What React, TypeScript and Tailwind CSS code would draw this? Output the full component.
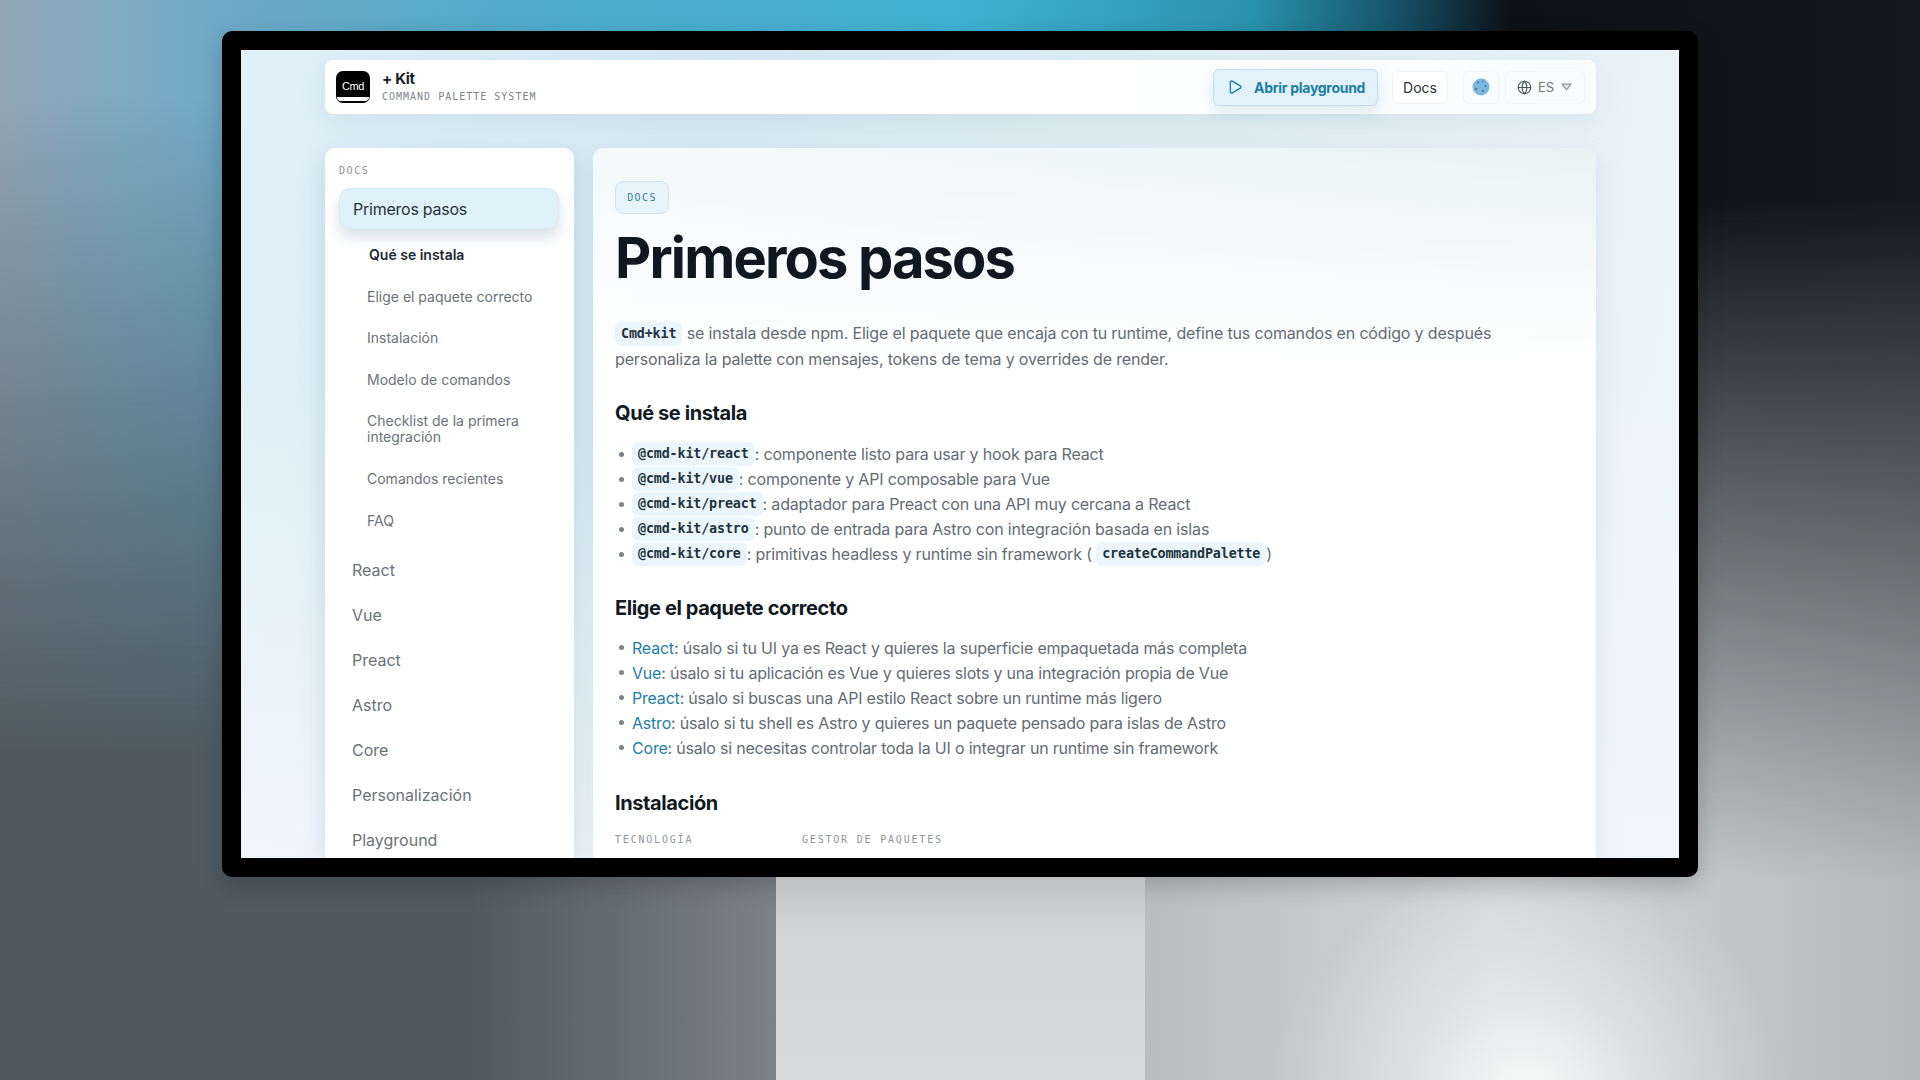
import { Globe, Play } from "lucide-react";
import type { ReactNode } from "react";

const sans = "font-['Inter','Noto_Sans',sans-serif]";
const mono = "font-['DejaVu_Sans_Mono','Liberation_Mono',monospace]";

function Code({ children }: { children: string }) {
  return (
    <code className="inline-flex items-center h-[24px] align-middle font-['DejaVu_Sans_Mono',monospace] text-[13.4px] font-bold text-[#1d3340] bg-[#eaf6fb] rounded-[6px] px-[6px] -translate-y-[1px]">
      {children}
    </code>
  );
}

function Sub({ children, active }: { children: string; active?: boolean }) {
  return (
    <div className={active ? "flex items-center h-[41.5px] pl-[30px] text-[14px] font-semibold text-[#1f2933]" : "flex items-center h-[41.5px] pl-[28px] text-[14px] text-[#6b7278]"}>
      {children}
    </div>
  );
}

function Top({ children }: { children: string }) {
  return <div className="flex items-center h-[45px] pl-[13px] text-[16px] text-[#6b7278]">{children}</div>;
}

function Li({ children }: { children: ReactNode }) {
  return (
    <li className="flex items-center h-[25px] text-[16px] text-[#646c73]">
      <span className="w-[5px] h-[5px] rounded-full bg-[#7b8288] ml-[4px] mr-[8px]" />
      <span className="whitespace-pre">{children}</span>
    </li>
  );
}

function Pkg({ name }: { name: string }) {
  return <span className="text-[#1f7ea6]">{name}</span>;
}

export default function App() {
  return (
    <div className={`${sans} relative w-[1920px] h-[1080px] overflow-hidden flex flex-col items-center pt-[31px] bg-[radial-gradient(ellipse_260px_230px_at_1530px_1095px,rgba(255,255,255,0.85)_0,rgba(255,255,255,0.35)_45%,rgba(255,255,255,0)_100%),linear-gradient(90deg,#4f5a62_0,#4f5a62_470px,#7b8288_776px,#b9bdbf_1146px,#d5d7d9_1500px,#b3b8ba_1920px)]`}>
      <div className="absolute left-0 top-0 w-[960px] h-[780px] bg-[linear-gradient(90deg,#93a5b5_0,#7caac3_130px,#6ea9c6_230px,#52abcb_500px,#3fb2d3_960px)] [mask-image:linear-gradient(180deg,black_0,black_100px,transparent_760px)]" />
      <div className="absolute left-[960px] top-0 w-[960px] h-[880px] bg-[linear-gradient(90deg,#3fb2d3_0,#2a93ae_290px,#165166_440px,#0c1116_550px,#15181d_960px)] [mask-image:linear-gradient(180deg,black_0,black_200px,transparent_880px)]" />
      <div className="relative w-[1476px] h-[846px] shrink-0 bg-black rounded-[10px] p-[19px] shadow-[0_8px_24px_rgba(0,0,0,0.2)]">
        <div className="w-[1438px] h-[808px] overflow-hidden flex flex-col pl-[84px] pr-[83px] pt-[10px] bg-[linear-gradient(180deg,rgba(240,247,252,0)_40%,rgba(240,247,252,1)_100%),linear-gradient(100deg,#e0f0f8_0,#d7e9f2_30%,#e2eff3_70%,#eef6fa_100%)]">
          <header className="h-[54px] shrink-0 flex items-center justify-between bg-[linear-gradient(90deg,#ffffff_0,#ffffff_60%,#f8fcfd_100%)] rounded-[8px] shadow-[0_8px_24px_rgba(120,160,180,0.15)] pl-[11px] pr-[11px]">
            <div className="flex items-center gap-[12px]">
              <div className="w-[34px] h-[32px] rounded-[7px] bg-black flex items-center justify-center relative overflow-hidden">
                <span className="font-['Liberation_Sans',sans-serif] text-[11px] text-white tracking-[-0.03em] -mt-[2px]">Cmd</span>
                <span className="absolute left-[1px] right-[1px] bottom-[2px] h-[4px] bg-white rounded-b-[5px]" />
              </div>
              <div className="flex flex-col">
                <span className="text-[15px] leading-[18px] font-bold text-[#17202a] tracking-[-0.02em]">+ Kit</span>
                <span className={`${mono} mt-[2px] text-[10px] leading-[14px] tracking-[0.1em] text-[#7d858b]`}>COMMAND PALETTE SYSTEM</span>
              </div>
            </div>
            <div className="flex items-center">
              <div className="w-[165px] h-[37px] rounded-[6px] border border-[#c4deec] bg-[#e3f2fa] flex items-center gap-[11px] pl-[13px] text-[14px] font-bold text-[#1b7fa3] shadow-[0_6px_16px_rgba(120,170,200,0.25)] tracking-[-0.02em]">
                <Play size={16} strokeWidth={2} />
                <span>Abrir playground</span>
              </div>
              <div className="ml-[14px] w-[56px] h-[33px] rounded-[6px] border border-[#f0f3f5] bg-white flex items-center justify-center text-[14px] text-[#2b3238]">Docs</div>
              <div className="ml-[15px] w-[36px] h-[33px] rounded-[6px] border border-[#f4f6f7] flex items-center justify-center">
                <svg width="18" height="18" viewBox="0 0 18 18">
                  <circle cx="9" cy="9" r="8.5" fill="#7db8e0" />
                  <circle cx="6" cy="4.5" r="1" fill="#3f6f92" />
                  <circle cx="11" cy="3.5" r="0.8" fill="#3f6f92" />
                  <circle cx="13.5" cy="8" r="1" fill="#3f6f92" />
                  <circle cx="4" cy="11" r="1.2" fill="#3f7f78" />
                  <circle cx="11" cy="13" r="1.1" fill="#3f6f92" />
                </svg>
              </div>
              <div className="ml-[6px] w-[80px] h-[33px] rounded-[6px] border border-[#f4f6f7] flex items-center pl-[11px] gap-[6px] text-[13px] leading-[15px] text-[#6f767c]">
                <Globe size={15} className="text-[#4b5560]" strokeWidth={1.75} />
                <span>ES</span>
                <svg width="11" height="8" viewBox="0 0 11 8" className="ml-[1px]">
                  <path d="M1 1.2h9L5.5 6.8z" fill="#e4e7ea" stroke="#8d9499" strokeWidth="1.2" strokeLinejoin="round" />
                </svg>
              </div>
            </div>
          </header>

          <div className="flex gap-[19px] mt-[34px] flex-1 min-h-0">
            <aside className="w-[249px] shrink-0 bg-white rounded-t-[10px] shadow-[0_8px_24px_rgba(110,150,175,0.28)] px-[14px] pt-[16px] overflow-hidden">
              <div className={`${mono} text-[10px] leading-[14px] tracking-[0.16em] text-[#8b9196]`}>DOCS</div>
              <div className="mt-[10px] w-[220px] h-[41px] rounded-[11px] border border-[#d8ecf6] bg-[#dff1f9] flex items-center pl-[13px] text-[16px] tracking-[-0.015em] text-[#27323b] shadow-[0_8px_14px_rgba(100,140,160,0.25)]">Primeros pasos</div>
              <div className="mt-[5px]">
                <Sub active>Qué se instala</Sub>
                <Sub>Elige el paquete correcto</Sub>
                <Sub>Instalación</Sub>
                <Sub>Modelo de comandos</Sub>
                <div className="h-[58px] flex items-center pl-[28px] text-[14px] leading-[16px] text-[#6b7278] pr-[12px]">Checklist de la primera integración</div>
                <Sub>Comandos recientes</Sub>
                <Sub>FAQ</Sub>
              </div>
              <div className="mt-[6px]">
                <Top>React</Top>
                <Top>Vue</Top>
                <Top>Preact</Top>
                <Top>Astro</Top>
                <Top>Core</Top>
                <Top>Personalización</Top>
                <Top>Playground</Top>
              </div>
            </aside>

            <main className="flex-1 min-w-0 rounded-t-[10px] overflow-hidden shadow-[0_8px_24px_rgba(110,150,175,0.18)] bg-[linear-gradient(180deg,rgba(255,255,255,0)_0,rgba(255,255,255,1)_30%),linear-gradient(90deg,#f3fafb_0,#e7f4f4_100%)] px-[22px] pt-[33px]">
              <div className={`${mono} w-[54px] h-[33px] rounded-[8px] border border-[#cfe6f0] bg-[#e7f4f9] flex items-center justify-center text-[10px] tracking-[0.14em] text-[#2f7f96]`}>DOCS</div>
              <h1 className="mt-[10px] text-[56px] leading-[68px] font-bold tracking-[-0.033em] text-[#10171e]">Primeros pasos</h1>
              <p className="mt-[29px] text-[16px] leading-[25px] text-[#646c73] tracking-[-0.01em] w-[960px]">
                <Code>Cmd+kit</Code> se instala desde npm. Elige el paquete que encaja con tu runtime, define tus comandos en código y después personaliza la palette con mensajes, tokens de tema y overrides de render.
              </p>
              <h2 className="mt-[27px] text-[20px] leading-[28px] font-bold tracking-[-0.02em] text-[#12191f]">Qué se instala</h2>
              <ul className="mt-[15.5px] tracking-[-0.01em]">
                <Li><Code>@cmd-kit/react</Code>: componente listo para usar y hook para React</Li>
                <Li><Code>@cmd-kit/vue</Code>: componente y API composable para Vue</Li>
                <Li><Code>@cmd-kit/preact</Code>: adaptador para Preact con una API muy cercana a React</Li>
                <Li><Code>@cmd-kit/astro</Code>: punto de entrada para Astro con integración basada en islas</Li>
                <Li><Code>@cmd-kit/core</Code>: primitivas headless y runtime sin framework ( <Code>createCommandPalette</Code>)</Li>
              </ul>
              <h2 className="mt-[26.5px] text-[20px] leading-[28px] font-bold tracking-[-0.02em] text-[#12191f]">Elige el paquete correcto</h2>
              <ul className="mt-[13.5px] tracking-[-0.0125em]">
                <Li><Pkg name="React" />: úsalo si tu UI ya es React y quieres la superficie empaquetada más completa</Li>
                <Li><Pkg name="Vue" />: úsalo si tu aplicación es Vue y quieres slots y una integración propia de Vue</Li>
                <Li><Pkg name="Preact" />: úsalo si buscas una API estilo React sobre un runtime más ligero</Li>
                <Li><Pkg name="Astro" />: úsalo si tu shell es Astro y quieres un paquete pensado para islas de Astro</Li>
                <Li><Pkg name="Core" />: úsalo si necesitas controlar toda la UI o integrar un runtime sin framework</Li>
              </ul>
              <h2 className="mt-[28.5px] text-[20px] leading-[28px] font-bold tracking-[-0.02em] text-[#12191f]">Instalación</h2>
              <div className={`${mono} mt-[15px] flex text-[10px] tracking-[0.18em] text-[#8f959a]`}>
                <span className="w-[187px]">TECNOLOGÍA</span>
                <span>GESTOR DE PAQUETES</span>
              </div>
            </main>
          </div>
        </div>
      </div>
      <div className="relative w-[369px] flex-1 bg-[linear-gradient(180deg,#bec0c2_0,#d2d3d5_25%,#d9dadc_100%)]" />
    </div>
  );
}
